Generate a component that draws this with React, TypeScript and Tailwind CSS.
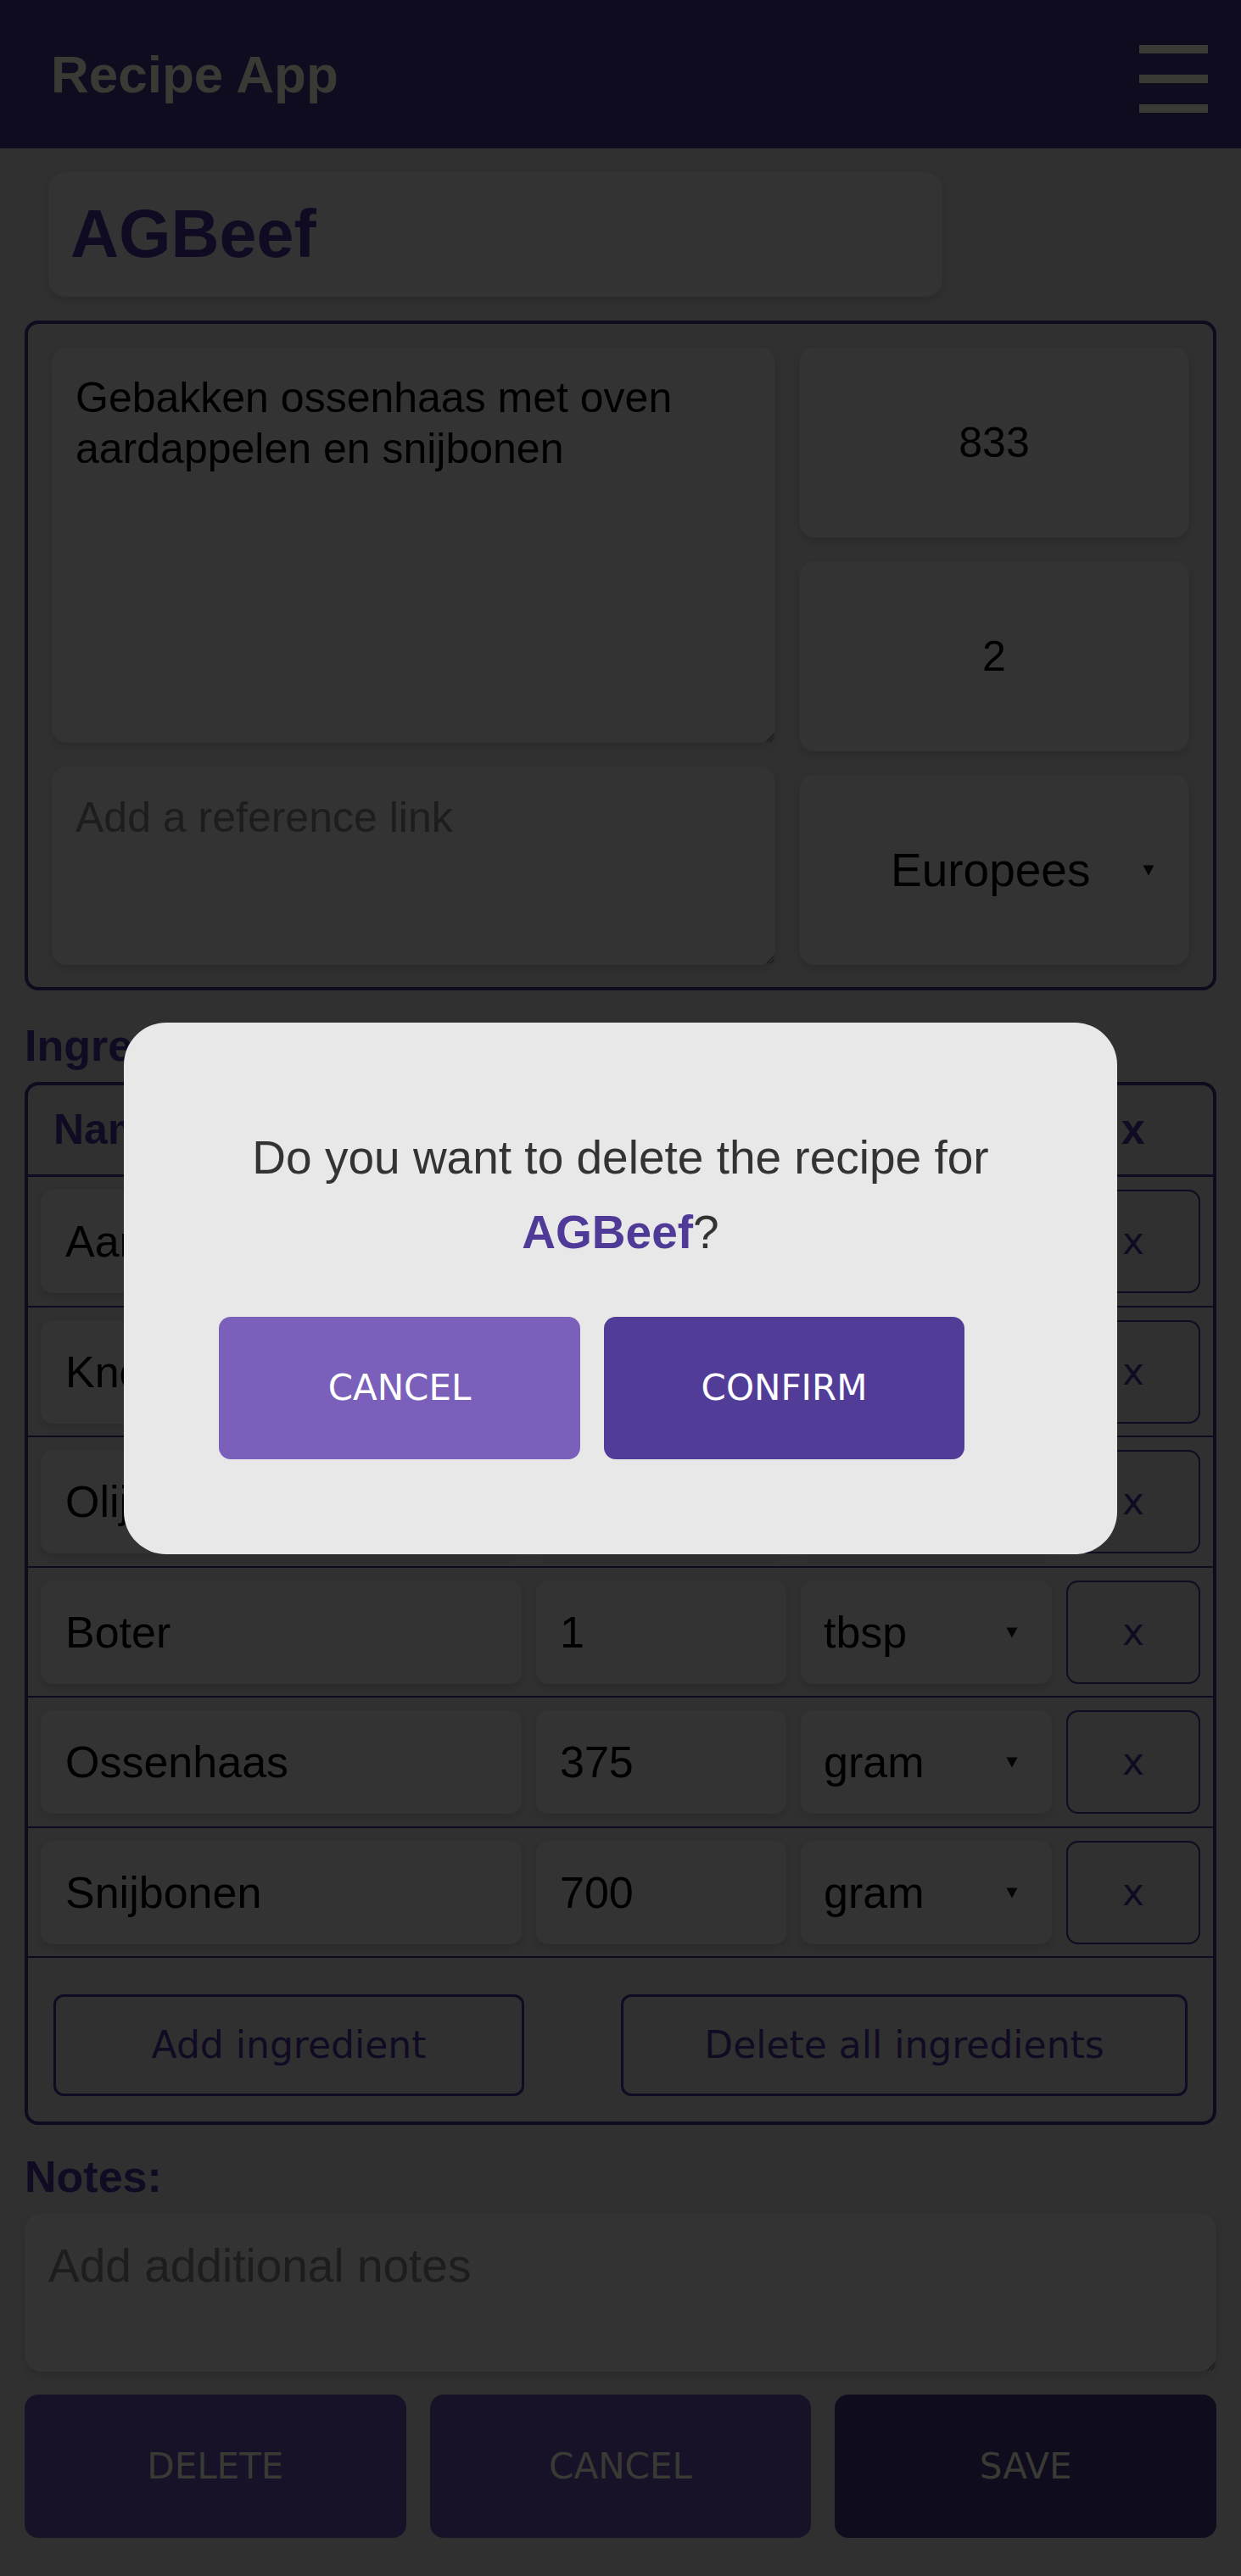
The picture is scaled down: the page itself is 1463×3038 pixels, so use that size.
import React from "react";

const ingredients = [
  { name: "Aardappelen", qty: "", unit: "" },
  { name: "Knoflook", qty: "", unit: "" },
  { name: "Olijfolie", qty: "", unit: "" },
  { name: "Boter", qty: "1", unit: "tbsp" },
  { name: "Ossenhaas", qty: "375", unit: "gram" },
  { name: "Snijbonen", qty: "700", unit: "gram" },
];

function Arrow() {
  return (
    <svg width="14" height="14" viewBox="0 0 14 14" className="shrink-0">
      <path d="M0.5 1.5h13L7 13.5z" fill="#050505" />
    </svg>
  );
}

function Grip() {
  return (
    <svg
      className="absolute bottom-[1px] right-[1px]"
      width="12"
      height="12"
      viewBox="0 0 12 12"
    >
      <path d="M11.5 2.5L2.5 11.5M11.5 6.5L6.5 11.5" stroke="#1a1a1a" strokeWidth="1.2" />
    </svg>
  );
}

const field =
  "bg-[#333333] shadow-[0_4px_8px_rgba(0,0,0,0.12)] text-black";

export default function App() {
  return (
    <div className="relative min-h-[3038px] bg-[#303030] font-['Liberation_Sans',Arial,sans-serif]">
      <header className="h-[175px] bg-[#100c1f] flex justify-between pl-[60px] pr-[39px]">
        <h1 className="self-center text-[62px] font-bold leading-none text-[#3a3a34]">
          Recipe App
        </h1>
        <div className="mt-[53px] flex flex-col gap-[25px] w-[81px]">
          <div className="h-[10px] bg-[#3a3a34]" />
          <div className="h-[10px] bg-[#3a3a34]" />
          <div className="h-[10px] bg-[#3a3a34]" />
        </div>
      </header>

      <main className="px-[29px] pt-[28px]">
        <div
          className={`ml-[28px] w-[1054px] h-[147px] rounded-[20px] ${field} pl-[26px] flex items-center text-[79px] font-bold`}
        >
          <span className="text-[#100b22]">AGBeef</span>
        </div>

        <section className="mt-[28px] border-4 border-[#0f0b1f] rounded-[16px] px-[28px] pt-[28px] pb-[26px] flex gap-[28px]">
          <div className="w-[853px] flex flex-col gap-[28px]">
            <div
              className={`relative h-[466px] rounded-[18px] ${field} px-[28px] pt-[29px] text-[50px] leading-[60px]`}
            >
              Gebakken ossenhaas met oven aardappelen en snijbonen
              <Grip />
            </div>
            <div
              className={`relative h-[234px] rounded-[18px] ${field} px-[28px] pt-[30px] text-[50px] leading-[60px] !text-[#1d1d1d]`}
            >
              Add a reference link
              <Grip />
            </div>
          </div>
          <div className="w-[460px] flex flex-col gap-[28px]">
            <div className={`h-[224px] rounded-[18px] ${field} flex items-center justify-center text-[50px]`}>
              833
            </div>
            <div className={`h-[224px] rounded-[18px] ${field} flex items-center justify-center text-[50px]`}>
              2
            </div>
            <div className={`h-[224px] rounded-[18px] ${field} flex items-center pl-[108px] pr-[41px] text-[55px]`}>
              <span className="flex-1">Europees</span>
              <Arrow />
            </div>
          </div>
        </section>

        <h2 className="mt-[35px] text-[52px] leading-[60px] font-bold text-[#100b22]">
          Ingredients:
        </h2>

        <section className="mt-[13px] border-4 border-[#0f0b1f] rounded-[16px]">
          <div className="h-[108px] border-b-[3px] border-[#0f0b1f] grid grid-cols-[567px_295px_296px_158px] gap-[17px] px-[15px] items-center text-[50px] font-bold text-[#100b22]">
            <div className="pl-[15px]">Name</div>
            <div />
            <div />
            <div className="text-center">x</div>
          </div>
          {ingredients.map((ing) => (
            <div
              key={ing.name}
              className="pt-[15px] pb-[14.5px] border-b-2 border-[#0f0b1f] grid grid-cols-[567px_295px_296px_158px] gap-[17px] px-[15px] text-[52px]"
            >
              <div className={`h-[122px] rounded-[14px] ${field} pl-[29px] flex items-center`}>
                {ing.name}
              </div>
              <div className={`h-[122px] rounded-[14px] ${field} pl-[28px] flex items-center`}>
                {ing.qty}
              </div>
              <div className={`h-[122px] rounded-[14px] ${field} pl-[27px] pr-[40px] flex items-center`}>
                <span className="flex-1">{ing.unit}</span>
                <Arrow />
              </div>
              <div className="h-[122px] rounded-[14px] border-2 border-[#0f0b22] flex items-center justify-center font-['DejaVu_Sans',sans-serif] text-[44px] text-[#100b22]">
                x
              </div>
            </div>
          ))}
          <div className="pt-[43px] pb-[30px] px-[30px] flex justify-between font-['DejaVu_Sans',sans-serif] text-[44px] text-[#100b22]">
            <div className="w-[555px] h-[120px] border-[3px] border-[#0f0b22] rounded-[12px] flex items-center justify-center">
              Add ingredient
            </div>
            <div className="w-[668px] h-[120px] border-[3px] border-[#0f0b22] rounded-[12px] flex items-center justify-center">
              Delete all ingredients
            </div>
          </div>
        </section>

        <h2 className="mt-[31px] text-[52px] leading-[60px] font-bold text-[#100b22]">
          Notes:
        </h2>
        <div
          className={`relative mt-[13px] h-[187px] rounded-[20px] ${field} px-[28px] pt-[31px] text-[55px] leading-[62px] !text-[#1d1d1d]`}
        >
          Add additional notes
          <Grip />
        </div>

        <div className="mt-[27px] grid grid-cols-3 gap-[28px] font-['DejaVu_Sans',sans-serif] text-[42px] text-[#3a3a34]">
          <div className="h-[169px] rounded-[16px] bg-[#171228] flex items-center justify-center">
            DELETE
          </div>
          <div className="h-[169px] rounded-[16px] bg-[#171228] flex items-center justify-center">
            CANCEL
          </div>
          <div className="h-[169px] rounded-[16px] bg-[#0f0c1e] flex items-center justify-center">
            SAVE
          </div>
        </div>
      </main>

      <div className="absolute inset-0 flex items-center justify-center">
        <div className="w-[1171px] h-[627px] rounded-[50px] bg-[#e8e8e8] pt-[115px]">
          <p className="px-[112px] text-center text-[55px] leading-[88px] text-[#333333]">
            Do you want to delete the recipe for{" "}
            <span className="font-bold text-[#4f3b97]">AGBeef</span>?
          </p>
          <div className="mt-[56px] flex gap-[28px] pl-[112px] font-['DejaVu_Sans',sans-serif] text-[42px] text-white">
            <div className="w-[426px] h-[168px] rounded-[14px] bg-[#7a60ba] flex items-center justify-center">
              CANCEL
            </div>
            <div className="w-[425px] h-[168px] rounded-[14px] bg-[#513d98] flex items-center justify-center">
              CONFIRM
            </div>
          </div>
        </div>
      </div>
    </div>
  );
}
